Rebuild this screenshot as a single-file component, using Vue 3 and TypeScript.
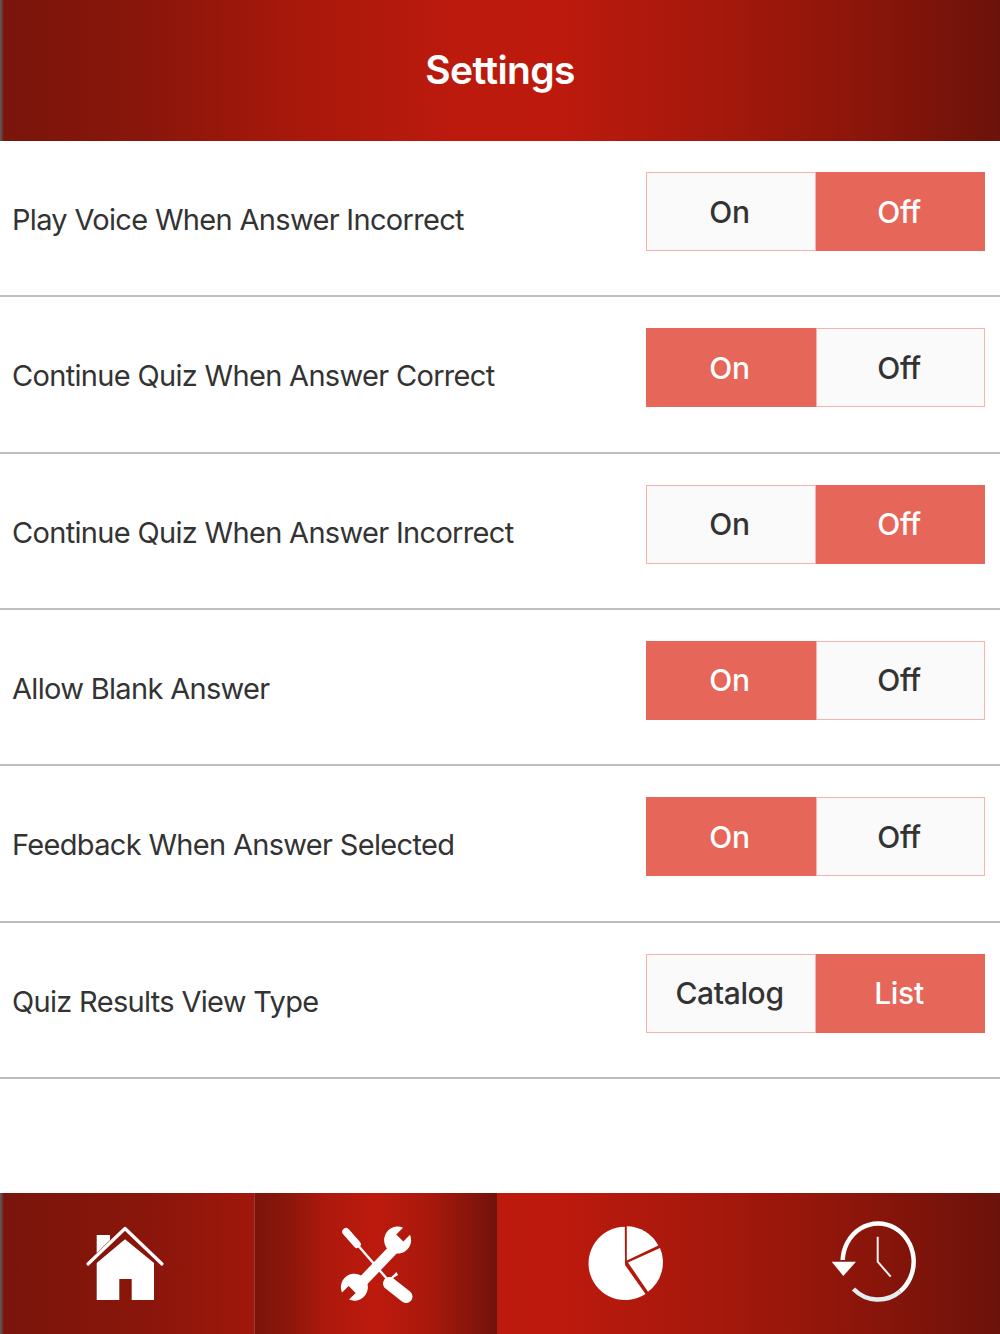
<script setup lang="ts">
import { reactive } from 'vue'

interface Setting {
  label: string
  options: [string, string]
  selected: number
}

const settings = reactive<Setting[]>([
  { label: 'Play Voice When Answer Incorrect', options: ['On', 'Off'], selected: 1 },
  { label: 'Continue Quiz When Answer Correct', options: ['On', 'Off'], selected: 0 },
  { label: 'Continue Quiz When Answer Incorrect', options: ['On', 'Off'], selected: 1 },
  { label: 'Allow Blank Answer', options: ['On', 'Off'], selected: 0 },
  { label: 'Feedback When Answer Selected', options: ['On', 'Off'], selected: 0 },
  { label: 'Quiz Results View Type', options: ['Catalog', 'List'], selected: 1 }
])
</script>

<template>
  <div class="page">
    <header class="header">
      <h1 class="title">Settings</h1>
    </header>

    <main class="list">
      <div v-for="s in settings" :key="s.label" class="row">
        <span class="label">{{ s.label }}</span>
        <div class="toggle">
          <button
            v-for="(o, i) in s.options"
            :key="o"
            type="button"
            class="seg"
            :class="{ active: s.selected === i }"
            @click="s.selected = i"
          >{{ o }}</button>
        </div>
      </div>
    </main>

    <nav class="tabs">
      <a class="tab home">
        <svg width="80" height="80" viewBox="0 0 80 80" fill="#fff">
          <path d="M3 41 L40 5.5 L77 41" fill="none" stroke="#fff" stroke-width="3.2" stroke-linecap="round" stroke-linejoin="round" />
          <path d="M11.7 12 H25 V17 L11.7 30 Z" />
          <path d="M40 16.3 L11.7 40 V77 H34.3 V56 H46.7 V77 H69 V40 Z" />
        </svg>
      </a>
      <a class="tab tools">
        <svg width="80" height="80" viewBox="0 0 80 80" fill="#fff">
          <path d="M10 8.7 L21 21.3" fill="none" stroke="#fff" stroke-width="7.5" stroke-linecap="round" />
          <path d="M21 21.3 L52 57" fill="none" stroke="#fff" stroke-width="2.4" />
          <path d="M60.5 49 L62 52 L48.5 60.5 Z" />
          <path d="M53.5 60.5 L70 73.5" fill="none" stroke="#fff" stroke-width="13" stroke-linecap="round" />
          <path d="M58.3 25.3 L21.7 63.7" fill="none" stroke="#fff" stroke-width="10.5" />
          <path d="M67 4.7 L60.3 11.4 L67.3 18.4 L74 11.7 A13.5 13.5 0 1 1 67 4.7 Z" />
          <path d="M6 69.6 L12.7 62.9 L19.7 69.9 L13 76.6 A13.5 13.5 0 1 0 6 69.6 Z" />
        </svg>
      </a>
      <a class="tab pie">
        <svg width="80" height="80" viewBox="0 0 80 80" fill="#fff">
          <path d="M40 42 L60.5 71 A36.7 36.7 0 1 1 39.8 3.7 Z" />
          <path d="M41.8 37.5 V3.2 A36 36 0 0 1 73.3 22.5 Z" />
          <path d="M43 39.5 L75 25 A36.5 36.5 0 0 1 63 68.8 Z" />
        </svg>
      </a>
      <a class="tab history">
        <svg width="90" height="90" viewBox="0 0 90 90" fill="none">
          <path d="M12.7 42 A35.5 38 0 1 1 70 73.5" stroke="#fff" stroke-width="4.5" />
          <path d="M23.5 71 A35.5 38 0 0 0 70 73.5" stroke="#e2eff0" stroke-width="4.5" />
          <path d="M1.7 43.7 H26 L13.3 58 Z" fill="#fff" />
          <path d="M47.7 18.7 V43.7 L60.7 58.7" stroke="#eef3f3" stroke-width="2" />
        </svg>
      </a>
    </nav>
  </div>
</template>

<style scoped>
.page {
  width: 1000px;
  height: 1334px;
  display: flex;
  flex-direction: column;
  background: #fff;
  font-family: Inter, "Liberation Sans", sans-serif;
  overflow: hidden;
}

.header {
  flex: 0 0 141px;
  display: flex;
  align-items: center;
  justify-content: center;
  box-sizing: border-box;
  padding-bottom: 2px;
  background: linear-gradient(90deg, #5b5f60 0, #7a150b 4px, #8a160b 15%, #a5180b 28%, #bb1a0d 45%, #bd1a0d 55%, #a5180c 72%, #8a150a 87%, #6b130b 100%);
}

.title {
  margin: 0;
  color: #fff;
  font-size: 39px;
  font-weight: 600;
  letter-spacing: -0.65px;
}

.list {
  flex: 1;
  display: flex;
  flex-direction: column;
}

.row {
  flex: 0 0 156.33px;
  box-sizing: border-box;
  display: flex;
  align-items: center;
  justify-content: space-between;
  padding: 3px 15px 0 12px;
  border-bottom: 2px solid #bdbdbd;
}

.label {
  color: #333;
  font-size: 29px;
  letter-spacing: -0.68px;
}

.toggle {
  align-self: flex-start;
  margin-top: 28px;
  width: 339px;
  height: 79px;
  display: grid;
  grid-template-columns: 170px 169px;
}

.seg {
  padding: 0 3px 0 0;
  border: 1px solid #f5b3ab;
  background: #fafafa;
  color: #333;
  font: 500 30px Inter, "Liberation Sans", sans-serif;
  letter-spacing: -0.35px;
  cursor: pointer;
}

.seg.active {
  background: #e7665a;
  border-color: #e7665a;
  color: #fff;
}

.tabs {
  flex: 0 0 141px;
  display: grid;
  grid-template-columns: 254px 243px 253px 250px;
  background: linear-gradient(90deg, #5b5f60 0, #7a150b 4px, #8a160b 15%, #a5180b 28%, #bb1a0d 45%, #bd1a0d 55%, #a5180c 72%, #8a150a 87%, #6b130b 100%);
}

.tab {
  display: flex;
  align-items: center;
  justify-content: center;
  padding-bottom: 1px;
  box-sizing: border-box;
}

.home {
  padding-right: 4px;
}

.tools {
  background: linear-gradient(90deg, #7a150c, #8f160b 15%, #ad190c 30%, #bd1a0d 50%, #a8190c 72%, #8a150b 88%, #6f130b);
  border-left: 1px solid #8f3f35;
}

.pie {
  padding-left: 3px;
}

svg {
  display: block;
}
</style>
